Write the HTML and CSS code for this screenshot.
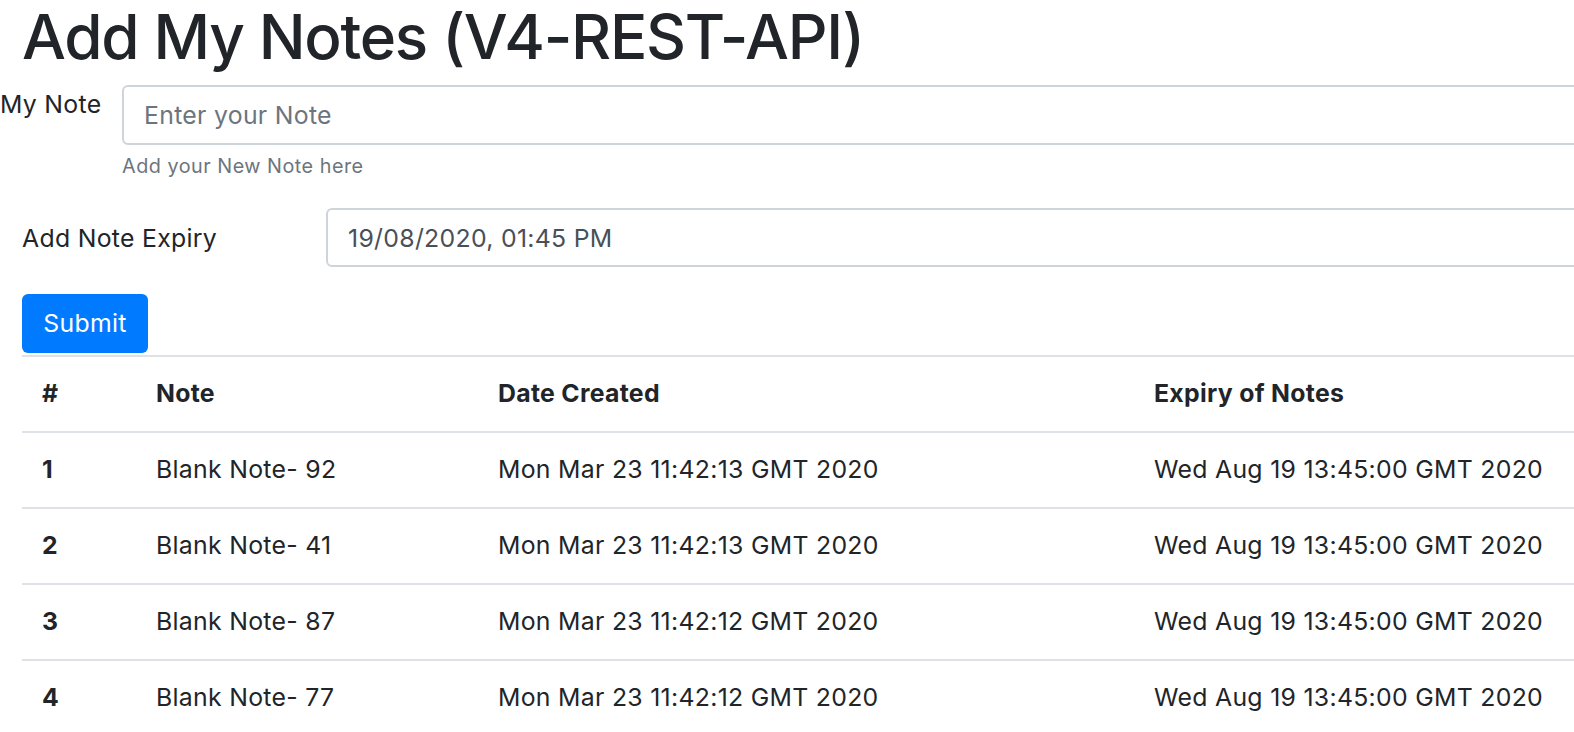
FILE: index.html
```html
<!DOCTYPE html>
<html lang="en">
<head>
<meta charset="utf-8">
<title>Add My Notes (V4-REST-API)</title>
<link rel="stylesheet" href="styles.css">
</head>
<body>
<main class="page">
  <h1 class="title">Add My Notes (V4-REST-API)</h1>
  <form class="note-form">
    <div class="row row-note">
      <label class="label-note" for="note">My Note</label>
      <div class="field">
        <input id="note" class="input" type="text" placeholder="Enter your Note">
        <small class="help">Add your New Note here</small>
      </div>
    </div>
    <div class="row row-expiry">
      <label class="label-expiry" for="expiry">Add Note Expiry</label>
      <div class="field">
        <div class="input input-value" id="expiry">19/08/2020, 01:45 PM</div>
      </div>
    </div>
    <button type="button" class="btn">Submit</button>
  </form>
  <table class="notes">
    <thead>
      <tr><th class="c1">#</th><th class="c2">Note</th><th class="c3">Date Created</th><th class="c4">Expiry of Notes</th></tr>
    </thead>
    <tbody>
      <tr><th>1</th><td>Blank Note- 92</td><td>Mon Mar 23 11:42:13 GMT 2020</td><td>Wed Aug 19 13:45:00 GMT 2020</td></tr>
      <tr><th>2</th><td>Blank Note- 41</td><td>Mon Mar 23 11:42:13 GMT 2020</td><td>Wed Aug 19 13:45:00 GMT 2020</td></tr>
      <tr><th>3</th><td>Blank Note- 87</td><td>Mon Mar 23 11:42:12 GMT 2020</td><td>Wed Aug 19 13:45:00 GMT 2020</td></tr>
      <tr><th>4</th><td>Blank Note- 77</td><td>Mon Mar 23 11:42:12 GMT 2020</td><td>Wed Aug 19 13:45:00 GMT 2020</td></tr>
    </tbody>
  </table>
</main>
</body>
</html>
```
FILE: styles.css
```css
html, body {
  margin: 0;
  padding: 0;
  overflow: hidden;
  background: #fff;
}
body {
  font-family: Inter, "Liberation Sans", sans-serif;
  font-size: 24.8px;
  line-height: 1.5;
  letter-spacing: 0.3px;
  color: #212529;
}
.page {
  width: 1800px;
}
.title {
  margin: 0 0 11px 22px;
  font-size: 62px;
  font-weight: 500;
  line-height: 1.2;
  letter-spacing: -1.3px;
  height: 74px;
}
.row {
  display: flex;
  align-items: flex-start;
}
.row-note {
  margin-bottom: 27px;
}
.label-note {
  width: 122px;
  flex: none;
  line-height: 37px;
  padding-top: 1px;
}
.row-expiry {
  margin-left: 22px;
  margin-bottom: 27px;
}
.label-expiry {
  width: 304px;
  flex: none;
  padding-top: 12px;
  line-height: 37px;
}
.field {
  display: flex;
  flex-direction: column;
}
.input {
  box-sizing: border-box;
  width: 1500px;
  height: 60px;
  padding: 9px 20px;
  border: 2px solid #ced4da;
  border-radius: 6px;
  font: inherit;
  letter-spacing: 0.3px;
  color: #495057;
  background: #fff;
  line-height: 38px;
}
.input-value {
  height: 59px;
}
.input::placeholder {
  color: #6c757d;
  opacity: 1;
}
.help {
  margin-top: 6px;
  font-size: 19.8px;
  line-height: 30px;
  letter-spacing: 0.5px;
  color: #6c757d;
}
.btn {
  display: block;
  margin: 0 0 2px 22px;
  box-sizing: border-box;
  width: 126px;
  height: 59px;
  padding: 0;
  border: none;
  border-radius: 6px;
  background: #007bff;
  color: #fff;
  font: inherit;
  letter-spacing: 0.3px;
  line-height: 59px;
}
.notes {
  margin-left: 22px;
  border-collapse: separate;
  border-spacing: 0;
  table-layout: fixed;
  width: 1700px;
}
.notes th, .notes td {
  text-align: left;
  padding: 17px 20px 19px 20px;
  line-height: 38px;
  vertical-align: middle;
  border-top: 2px solid #dee2e6;
  white-space: nowrap;
}
.notes th {
  font-weight: 700;
}
.c1 { width: 74px; }
.c2 { width: 302px; }
.c3 { width: 616px; }
.c4 { width: 548px; }
```
